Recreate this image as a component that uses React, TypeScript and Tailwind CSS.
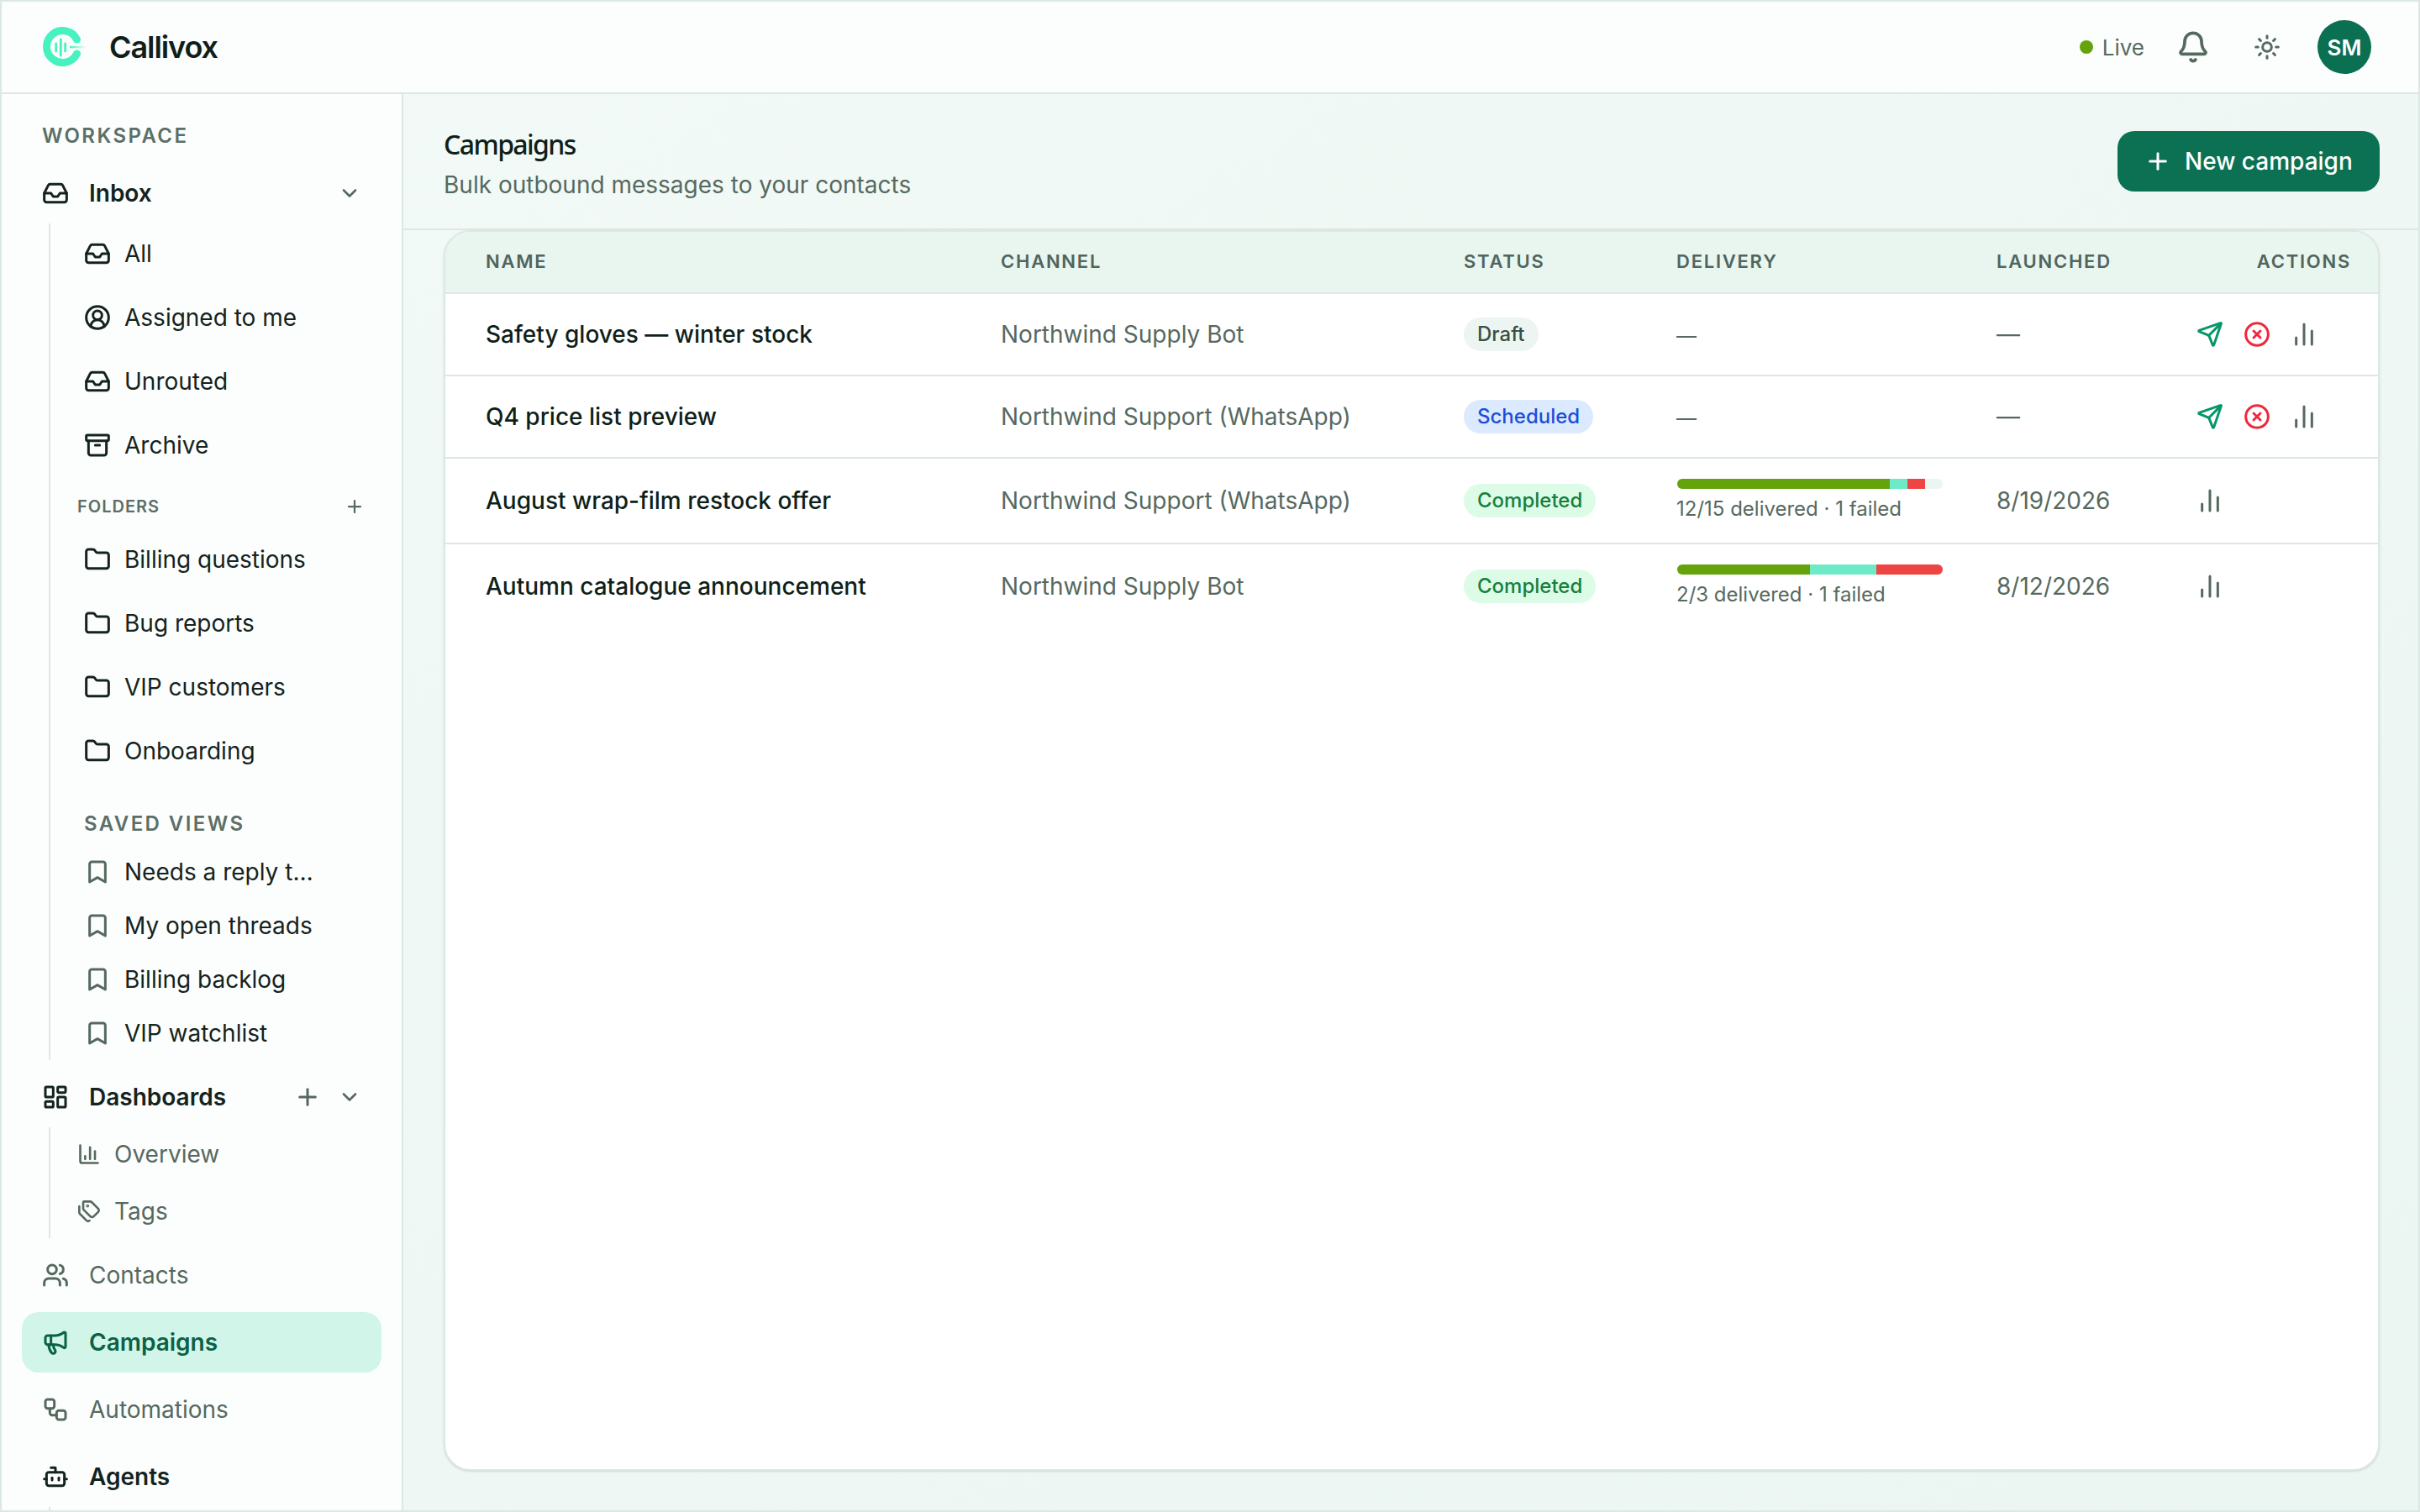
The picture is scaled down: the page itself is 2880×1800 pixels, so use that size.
import * as React from "react";
import {
  Archive,
  Bell,
  Bookmark,
  Bot,
  ChartColumn,
  ChartNoAxesColumn,
  ChevronDown,
  CircleUserRound,
  CircleX,
  Folder,
  Inbox,
  LayoutDashboard,
  Megaphone,
  Plus,
  Send,
  Sun,
  Tags,
  Users,
  Workflow,
} from "lucide-react";

const gridCols = "grid grid-cols-[661px_551px_253px_381px_238px_1fr]";
const stroke = 2.25;

function Logo() {
  return (
    <svg viewBox="0 0 54 48" className="h-[48px] w-[54px]" fill="none">
      <defs>
        <linearGradient id="tail" x1="33" x2="53" y1="0" y2="0" gradientUnits="userSpaceOnUse">
          <stop offset="0" stopColor="#45f2c0" />
          <stop offset="1" stopColor="#45f2c0" stopOpacity="0" />
        </linearGradient>
      </defs>
      <path d="M41.5 15A19 19 0 1 0 41.5 32" stroke="#45f2c0" strokeWidth="9" strokeLinecap="round" />
      <path d="M16.7 20v9M22.3 15v19M27.7 20v9" stroke="#45f2c0" strokeWidth="2.8" strokeLinecap="round" />
      <rect x="33" y="22.7" width="20" height="2.6" fill="url(#tail)" />
    </svg>
  );
}

function SubRow({ icon: Icon, label }: { icon: React.ElementType; label: string }) {
  return (
    <div className="flex h-[72px] items-center gap-[16px] pl-[40px]">
      <Icon strokeWidth={stroke} className="size-[32px] shrink-0 text-[#14231e]" />
      <span>{label}</span>
    </div>
  );
}

function SavedRow({ label }: { label: string }) {
  return (
    <div className="flex h-[60px] items-center gap-[16px] pl-[40px]">
      <Bookmark strokeWidth={stroke} className="size-[32px] shrink-0 text-[#56695f]" />
      <span>{label}</span>
    </div>
  );
}

function MainRow({
  icon: Icon,
  label,
  tone = "muted",
}: {
  icon: React.ElementType;
  label: string;
  tone?: "muted" | "dark" | "active";
}) {
  const toneClass =
    tone === "active"
      ? "bg-[#d1f5e8] font-semibold text-[#0a6146]"
      : tone === "dark"
        ? "font-semibold text-[#14231e]"
        : "text-[#56695f]";
  return (
    <div className={`mx-[24px] flex h-[72px] items-center gap-[24px] rounded-[20px] pl-[24px] ${toneClass}`}>
      <Icon strokeWidth={stroke} className="size-[32px] shrink-0" />
      <span>{label}</span>
    </div>
  );
}

function Badge({ label, className }: { label: string; className: string }) {
  return (
    <span className={`inline-flex h-[40px] items-center rounded-full px-[16px] text-[24px] font-medium ${className}`}>
      {label}
    </span>
  );
}

function Delivery({ green, teal, red, caption }: { green: number; teal: number; red: number; caption: string }) {
  return (
    <div className="flex w-[317px] flex-col gap-[9px] pb-[2px]">
      <div className="ml-[1px] flex h-[12px] overflow-hidden rounded-full bg-[#ecf5f1]">
        <div className="h-full bg-[#65a30d]" style={{ width: `${green}%` }} />
        <div className="h-full bg-[#6eebc6]" style={{ width: `${teal}%` }} />
        <div className="h-full bg-[#ef4444]" style={{ width: `${red}%` }} />
      </div>
      <span className="text-[24px] leading-[30px] text-[#56695f]">{caption}</span>
    </div>
  );
}

function Actions({ full }: { full?: boolean }) {
  return (
    <div className="flex items-center gap-[24px]">
      {full && <Send strokeWidth={stroke} className="size-[32px] text-[#059669]" />}
      {full && <CircleX strokeWidth={stroke} className="size-[32px] text-[#f0283c]" />}
      <ChartNoAxesColumn strokeWidth={stroke} className="size-[32px] text-[#56695f]" />
    </div>
  );
}

const rows = [
  {
    name: "Safety gloves — winter stock",
    channel: "Northwind Supply Bot",
    badge: <Badge label="Draft" className="bg-[#ecf5f1] text-[#37504a]" />,
    delivery: <span className="text-[24px] text-[#56695f]">—</span>,
    launched: "—",
    full: true,
    height: "h-[98px]",
  },
  {
    name: "Q4 price list preview",
    channel: "Northwind Support (WhatsApp)",
    badge: <Badge label="Scheduled" className="bg-[#dbeafe] text-[#1d4ed8]" />,
    delivery: <span className="text-[24px] text-[#56695f]">—</span>,
    launched: "—",
    full: true,
    height: "h-[98px]",
  },
  {
    name: "August wrap-film restock offer",
    channel: "Northwind Support (WhatsApp)",
    badge: <Badge label="Completed" className="bg-[#dcfce7] text-[#15803d]" />,
    delivery: <Delivery green={80} teal={6.67} red={6.67} caption="12/15 delivered · 1 failed" />,
    launched: "8/19/2026",
    full: false,
    height: "h-[102px]",
  },
  {
    name: "Autumn catalogue announcement",
    channel: "Northwind Supply Bot",
    badge: <Badge label="Completed" className="bg-[#dcfce7] text-[#15803d]" />,
    delivery: <Delivery green={50} teal={25} red={25} caption="2/3 delivered · 1 failed" />,
    launched: "8/12/2026",
    full: false,
    height: "h-[102px]",
  },
];

export default function App() {
  return (
    <div className="flex h-[1800px] w-[2880px] flex-col overflow-hidden border-2 border-[#dce8e3] bg-gradient-to-br from-[#f3faf7] to-[#ebf5f1] font-[Inter,sans-serif] text-[28px] text-[#14231e]">
      {/* top bar */}
      <header className="flex h-[110px] shrink-0 items-center justify-between border-b-2 border-[#dce8e3] bg-[#fcfefd] pr-[56px] pl-[48px]">
        <div className="flex items-center gap-[26px]">
          <Logo />
          <span className="text-[36px] font-semibold tracking-[-0.03em] text-[#0f1f1a]">Callivox</span>
        </div>
        <div className="flex items-center">
          <span className="size-[16px] rounded-full bg-[#65a30d]" />
          <span className="ml-[11px] text-[26px] text-[#56695f]">Live</span>
          <Bell strokeWidth={stroke} className="ml-[38px] size-[40px] text-[#56695f]" />
          <Sun strokeWidth={stroke} className="ml-[52px] size-[32px] text-[#56695f]" />
          <div className="ml-[44px] flex size-[64px] items-center justify-center rounded-full bg-[#0b6f52] text-[26px] font-semibold text-white">
            SM
          </div>
        </div>
      </header>

      <div className="flex min-h-0 flex-1">
        {/* sidebar */}
        <aside className="w-[478px] shrink-0 overflow-hidden border-r-2 border-[#dce8e3] bg-[#fcfefd]">
          <div className="mt-[32px] mb-[14px] flex h-[36px] items-center pl-[48px] text-[24px] font-semibold tracking-[0.1em] text-[#5b6f68]">
            WORKSPACE
          </div>

          <div className="mx-[24px] flex h-[72px] items-center gap-[24px] pr-[24px] pl-[24px] font-semibold">
            <Inbox strokeWidth={stroke} className="size-[32px] shrink-0" />
            <span className="flex-1">Inbox</span>
            <ChevronDown strokeWidth={stroke} className="size-[28px] text-[#56695f]" />
          </div>

          <div className="ml-[56px] border-l-2 border-[#dce8e3] pb-[2px]">
            <div className="flex flex-col gap-[4px]">
              <SubRow icon={Inbox} label="All" />
              <SubRow icon={CircleUserRound} label="Assigned to me" />
              <SubRow icon={Inbox} label="Unrouted" />
              <SubRow icon={Archive} label="Archive" />
            </div>

            <div className="mt-[19px] mb-[9px] flex h-[36px] w-[374px] items-center justify-between pl-[32px] text-[20px] font-semibold tracking-[0.05em] text-[#5b6f68]">
              <span>FOLDERS</span>
              <Plus strokeWidth={stroke} className="size-[24px] text-[#56695f]" />
            </div>

            <div className="flex flex-col gap-[4px]">
              <SubRow icon={Folder} label="Billing questions" />
              <SubRow icon={Folder} label="Bug reports" />
              <SubRow icon={Folder} label="VIP customers" />
              <SubRow icon={Folder} label="Onboarding" />
            </div>

            <div className="mt-[33px] mb-[9px] flex h-[36px] items-center pl-[40px] text-[24px] font-semibold tracking-[0.1em] text-[#5b6f68]">
              SAVED VIEWS
            </div>

            <div className="flex flex-col gap-[4px]">
              <SavedRow label="Needs a reply t…" />
              <SavedRow label="My open threads" />
              <SavedRow label="Billing backlog" />
              <SavedRow label="VIP watchlist" />
            </div>
          </div>

          <div className="mx-[24px] mt-[8px] flex h-[72px] items-center gap-[24px] pr-[24px] pl-[24px] font-semibold">
            <LayoutDashboard strokeWidth={stroke} className="size-[32px] shrink-0" />
            <span className="flex-1">Dashboards</span>
            <div className="flex items-center gap-[20px]">
              <Plus strokeWidth={stroke} className="size-[32px] text-[#56695f]" />
              <ChevronDown strokeWidth={stroke} className="size-[28px] text-[#56695f]" />
            </div>
          </div>

          <div className="ml-[56px] flex flex-col gap-[4px] border-l-2 border-[#dce8e3] text-[#56695f]">
            <div className="flex h-[64px] items-center gap-[16px] pl-[32px]">
              <ChartColumn strokeWidth={stroke} className="size-[28px] shrink-0" />
              <span>Overview</span>
            </div>
            <div className="flex h-[64px] items-center gap-[16px] pl-[32px]">
              <Tags strokeWidth={stroke} className="size-[28px] shrink-0" />
              <span>Tags</span>
            </div>
          </div>

          <div className="mt-[8px] flex flex-col gap-[8px]">
            <MainRow icon={Users} label="Contacts" />
            <MainRow icon={Megaphone} label="Campaigns" tone="active" />
            <MainRow icon={Workflow} label="Automations" />
            <MainRow icon={Bot} label="Agents" tone="dark" />
          </div>

          <div className="ml-[56px] h-[8px] border-l-2 border-[#dce8e3]" />
        </aside>

        {/* main */}
        <main className="flex min-w-0 flex-1 flex-col">
          <div className="flex h-[162px] shrink-0 items-center justify-between border-b-2 border-[#dce8e3] pr-[46px] pl-[48px]">
            <div className="flex flex-col pt-[3px]">
              <h1 className="font-['Noto_Sans',sans-serif] text-[32px] leading-[48px] font-medium tracking-[-0.05em] text-[#0f1f1a]">
                Campaigns
              </h1>
              <p className="mt-[4px] text-[28px] leading-[40px] text-[#56695f]">Bulk outbound messages to your contacts</p>
            </div>
            <button className="flex h-[72px] w-[312px] items-center gap-[16px] rounded-[20px] bg-[#0b7152] pl-[32px] font-medium text-white">
              <Plus strokeWidth={stroke} className="size-[32px]" />
              New campaign
            </button>
          </div>

          <div className="flex min-h-0 flex-1 flex-col pr-[46px] pb-[47px] pl-[48px]">
            <section className="flex-1 overflow-hidden rounded-[32px] border-2 border-[#dce8e3] bg-white shadow-sm">
              <div className={`${gridCols} h-[74px] items-center border-b-2 border-[#dce8e3] bg-[#e9f5ef] pb-[2px] text-[22px] font-semibold tracking-[0.08em] text-[#4f655d]`}>
                <span className="pl-[48px]">NAME</span>
                <span>CHANNEL</span>
                <span>STATUS</span>
                <span>DELIVERY</span>
                <span>LAUNCHED</span>
                <span className="pr-[32px] text-right">ACTIONS</span>
              </div>
              {rows.map((row, i) => (
                <div
                  key={row.name}
                  className={`${gridCols} ${row.height} items-center border-b-2 ${i < rows.length - 1 ? "border-[#dce8e3]" : "border-transparent"}`}
                >
                  <span className="pl-[48px] font-medium text-[#0f1f1a]">{row.name}</span>
                  <span className="text-[#56695f]">{row.channel}</span>
                  <div className="flex items-center">{row.badge}</div>
                  <div>{row.delivery}</div>
                  <span className="text-[#56695f]">{row.launched}</span>
                  <Actions full={row.full} />
                </div>
              ))}
            </section>
          </div>
        </main>
      </div>
    </div>
  );
}
